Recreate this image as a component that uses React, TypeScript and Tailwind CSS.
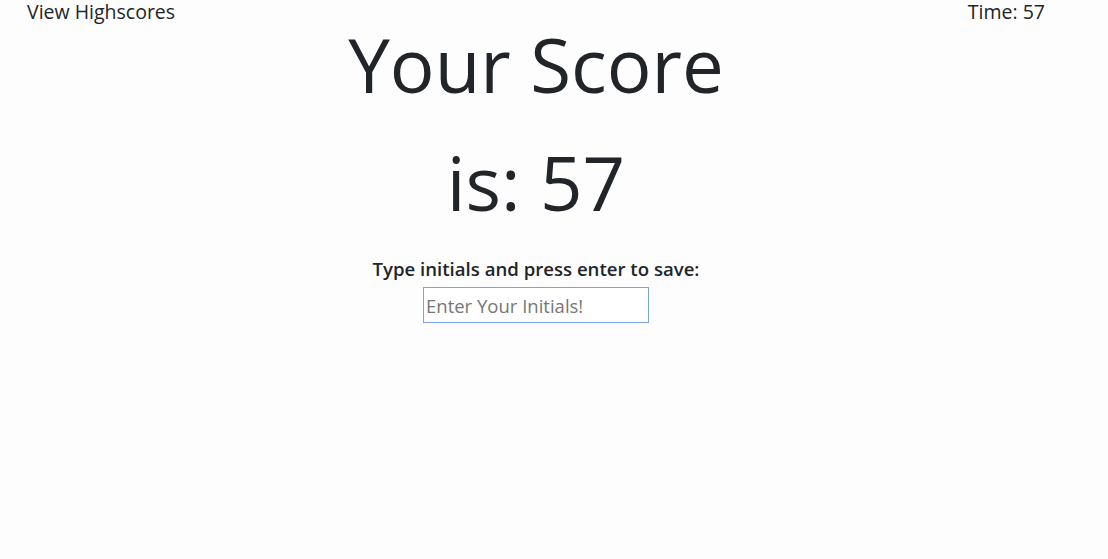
import React from 'react';

export default function App() {
  return (
    <div className="min-h-[559px] w-full bg-[#fdfdfd] text-[#212529] font-['Open_Sans',sans-serif]">
      <header className="flex justify-between pl-[27px] pr-[63px] text-[19.5px] leading-[24px]">
        <a className="cursor-pointer">View Highscores</a>
        <span>Time: 57</span>
      </header>
      <main className="flex w-[1072px] flex-col items-center">
        <h1 className="text-[74.5px] font-normal leading-[86px] -mt-[3px]">Your Score</h1>
        <h1 className="text-[74.5px] font-normal leading-[86px] mt-[32px]">is: 57</h1>
        <label className="mt-[32px] text-[18.6px] font-semibold leading-[24px]">
          Type initials and press enter to save:
        </label>
        <input
          autoFocus
          placeholder="Enter Your Initials!"
          className="mt-[6px] h-[36px] w-[226px] border border-[#7aa4e6] bg-white px-[2px] text-[18.5px] text-[#212529] placeholder:text-[#767676] outline-none"
        />
      </main>
    </div>
  );
}
